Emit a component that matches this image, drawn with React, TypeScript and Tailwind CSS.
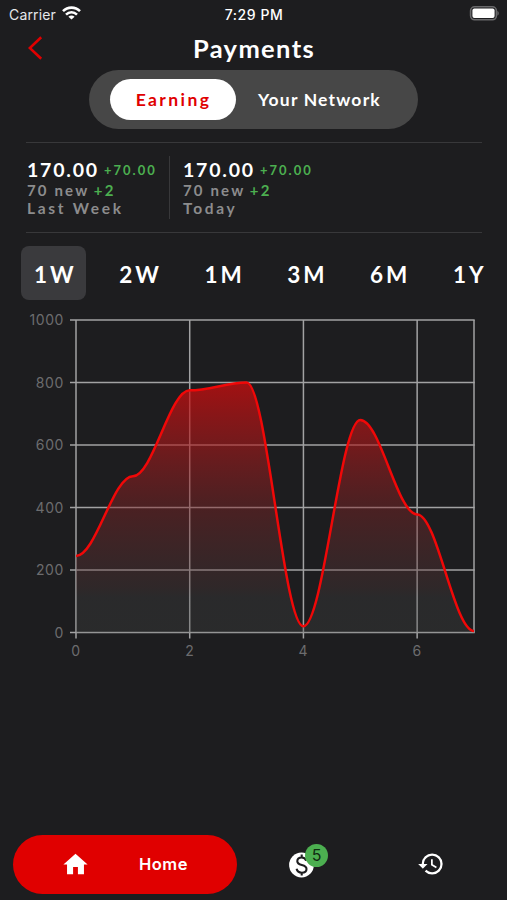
import type { ReactNode } from "react";
import { MdHistory, MdHome } from "react-icons/md";

const ranges = ["1W", "2W", "1M", "3M", "6M", "1Y"];

const stats = [
  { amount: "170.00", change: "+70.00", count: "70 new", added: "+2", label: "Last Week" },
  { amount: "170.00", change: "+70.00", count: "70 new", added: "+2", label: "Today" },
];

const points = [245, 500, 775, 800, 20, 680, 378, 5];

const chart = { left: 76, right: 474, top: 10, bottom: 322.5 };
const toX = (i: number) => chart.left + (i * (chart.right - chart.left)) / 7;
const toY = (v: number) => chart.bottom - (v * (chart.bottom - chart.top)) / 1000;

function linePath() {
  const step = (toX(1) - toX(0)) * 0.35;
  return points
    .map((v, i) => {
      const x = toX(i);
      const y = toY(v);
      if (i === 0) return `M${x},${y}`;
      return `C${toX(i - 1) + step},${toY(points[i - 1])} ${x - step},${y} ${x},${y}`;
    })
    .join(" ");
}

function StatusBar() {
  return (
    <div className="grid h-7 grid-cols-3 items-center pl-[9px] pr-2 font-['Inter'] text-[14px] text-white">
      <div className="flex items-center gap-[6px]">
        <span className="tracking-[0.15px] text-gray-200">Carrier</span>
        <svg className="mt-[-2px]" width="19" height="14" viewBox="0 0 19 14" fill="none" stroke="white" strokeWidth="2.6">
          <path d="M1 5.2C5.8 0.4 13.2 0.4 18 5.2" />
          <path d="M4 8.6C7.2 5.5 11.8 5.5 15 8.6" />
          <path d="M9.5 13.6L6.4 10.7C8.2 9.1 10.8 9.1 12.6 10.7Z" fill="white" stroke="none" />
        </svg>
      </div>
      <span className="text-center text-[14px] font-medium tracking-[0.55px]">7:29 PM</span>
      <svg className="mt-[-2px] justify-self-end" width="31" height="15" viewBox="0 0 31 15">
        <rect x="2.6" y="0.8" width="25.8" height="13" rx="4" fill="none" stroke="#69696b" strokeWidth="1.6" />
        <rect x="4.4" y="2.6" width="22.2" height="9.4" rx="2" fill="white" />
        <path d="M29.4 5V9.6C31.2 9 31.2 5.6 29.4 5Z" fill="#69696b" />
      </svg>
    </div>
  );
}

function Stat({ item }: { item: (typeof stats)[number] }) {
  return (
    <div className="whitespace-nowrap font-bold text-[#8c8c8d]">
      <div className="flex h-[21px] items-center leading-5">
        <span className="text-[19.5px] leading-none tracking-[1.8px] text-white">{item.amount}</span>
        <span className="ml-[5px] text-[13px] leading-none tracking-[2px] text-[#4caf50]">{item.change}</span>
      </div>
      <div className="flex h-[18px] text-[15px] leading-[18px] tracking-[2.15px]">
        <span>{item.count}</span>
        <span className="ml-[4.5px] text-[#4caf50]">{item.added}</span>
      </div>
      <div className="text-[15.5px] leading-[18px] tracking-[2.7px]">{item.label}</div>
    </div>
  );
}

function EarningsChart() {
  const line = linePath();
  return (
    <svg className="block" width="507" height="360" viewBox="0 0 507 360">
      <defs>
        <linearGradient id="area" x1="0" y1={toY(800)} x2="0" y2={chart.bottom} gradientUnits="userSpaceOnUse">
          <stop offset="0" stopColor="#cc0d0e" stopOpacity="0.76" />
          <stop offset="0.25" stopColor="#ac181a" stopOpacity="0.6" />
          <stop offset="0.5" stopColor="#832426" stopOpacity="0.45" />
          <stop offset="0.82" stopColor="#533c3c" stopOpacity="0.34" />
          <stop offset="0.86" stopColor="#484848" stopOpacity="0.3" />
          <stop offset="1" stopColor="#484a48" stopOpacity="0.3" />
        </linearGradient>
      </defs>
      <g stroke="#a2a2a3" strokeWidth="1.5">
        {[0, 200, 400, 600, 800, 1000].map((v) => (
          <line key={v} x1={chart.left - 6} x2={chart.right + 0.7} y1={toY(v)} y2={toY(v)} />
        ))}
        {[0, 2, 4, 6].map((v) => (
          <line key={v} x1={toX(v)} x2={toX(v)} y1={chart.top} y2={chart.bottom + 6} />
        ))}
        <line x1={chart.right} x2={chart.right} y1={chart.top} y2={chart.bottom} />
      </g>
      <path d={`${line} L${chart.right},${chart.bottom} L${chart.left},${chart.bottom} Z`} fill="url(#area)" />
      <path d={line} fill="none" stroke="#f00808" strokeWidth="2.5" />
      <g fill="#6c6c6e" fontFamily="Inter, sans-serif" fontSize="14" letterSpacing="0.6">
        {[0, 200, 400, 600, 800, 1000].map((v) => (
          <text key={v} x="64" y={toY(v) + 5} textAnchor="end">
            {v}
          </text>
        ))}
        {[0, 2, 4, 6].map((v) => (
          <text key={v} x={toX(v)} y={chart.bottom + 23.5} textAnchor="middle">
            {v}
          </text>
        ))}
      </g>
    </svg>
  );
}

function CoinIcon() {
  return (
    <svg className="block" width="26" height="26" viewBox="0 0 26 26" fill="none">
      <circle cx="12.5" cy="13" r="12.4" fill="white" />
      <path
        d="M17.2 8.8C16.6 6.6 15 5.5 12.7 5.5C10.1 5.5 8.3 7 8.3 9.2C8.3 11.3 9.8 12.2 12.8 13C16 13.8 17.5 14.8 17.5 17C17.5 19.3 15.6 20.7 12.8 20.7C10 20.7 8.1 19.3 7.6 16.8M12.7 2.4V5.6M12.7 20.6V23.6"
        stroke="#1d1d1f"
        strokeWidth="2.1"
      />
    </svg>
  );
}

function NavItem({ children }: { children: ReactNode }) {
  return <div className="flex w-[129px] items-center justify-center text-white">{children}</div>;
}

export default function App() {
  return (
    <div className="flex h-[900px] w-[507px] flex-col overflow-hidden bg-[#1d1d1f] font-['Lato',sans-serif]">
      <StatusBar />

      <header className="grid h-[42px] grid-cols-[60px_1fr_60px] items-center">
        <svg className="ml-7 mt-[-2px]" width="15" height="24" viewBox="0 0 15 24" fill="none" stroke="#e00000" strokeWidth="2.6">
          <path d="M13.2 1.2L1.8 12L13.2 22.8" />
        </svg>
        <h1 className="pl-[1px] text-center text-[25.5px] font-bold leading-none tracking-[1.35px] text-white">
          Payments
        </h1>
      </header>

      <div className="ml-[89px] flex h-[59px] w-[329px] items-center rounded-full bg-[#474747] pl-[21px] text-[17.5px] font-bold">
        <div className="flex h-[41px] w-[126px] items-center justify-center rounded-full bg-white pl-[1px] pt-[2px] tracking-[2.4px] text-[#e00000]">
          Earning
        </div>
        <div className="ml-[22px] pt-[2px] tracking-[1.2px] text-white">Your Network</div>
      </div>

      <section className="ml-[26px] mt-[13px] flex h-[91px] w-[456px] border-y border-[#38383a] pl-px pt-[13px]">
        <div className="h-[63px] w-[143px] border-r border-[#38383a] pt-[3.5px]">
          <Stat item={stats[0]} />
        </div>
        <div className="pl-[13px] pt-[3.5px]">
          <Stat item={stats[1]} />
        </div>
      </section>

      <div className="ml-[21px] mt-[13px] flex h-[54px] gap-[20px]">
        {ranges.map((range, i) => (
          <button
            key={range}
            className={`h-full shrink-0 rounded-lg pl-[13px] pr-[9.5px] pt-[3px] text-[22.5px] font-bold tracking-[3px] text-white ${
              i === 0 ? "bg-[#3a3a3d]" : ""
            }`}
          >
            {range}
          </button>
        ))}
      </div>

      <div className="mt-[10px]">
        <EarningsChart />
      </div>

      <nav className="mb-[6px] ml-[13px] mt-auto flex h-[59px] font-['Inter']">
        <div className="flex w-[224px] items-center rounded-full bg-[#e00000] pl-[48px] text-white">
          <MdHome size={29} />
          <span className="ml-[49px] text-[16.5px] font-semibold tracking-[0.5px]">Home</span>
        </div>
        <NavItem>
          <div className="relative">
            <CoinIcon />
            <span className="absolute left-[16.5px] top-[-8px] flex size-[23px] items-center justify-center rounded-full bg-[#4caf50] text-[16px] text-[#102a12]">
              5
            </span>
          </div>
        </NavItem>
        <NavItem>
          <MdHistory size={28} className="mt-[-2px]" />
        </NavItem>
      </nav>
    </div>
  );
}
